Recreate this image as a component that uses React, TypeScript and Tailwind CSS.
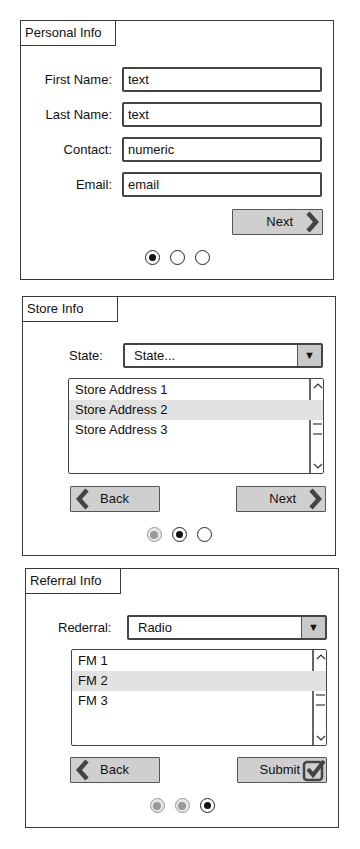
import React from "react";

const FONT = { fontFamily: '"Comic Sans MS", "Liberation Sans", Arial, sans-serif' };

type PanelProps = {
  title: string;
  className: string;
  children: React.ReactNode;
};

function Panel({ title, className, children }: PanelProps) {
  return (
    <div className={`flex h-[260px] w-[314px] flex-col border-[1.5px] border-[#3a3a3a] bg-white ${className}`}>
      <div className="flex h-[25px] w-[95px] items-center border-r-[1.5px] border-b-[1.5px] border-[#3a3a3a] pl-[4px] text-[13px]">
        {title}
      </div>
      {children}
    </div>
  );
}

function Chevron({ dir }: { dir: "left" | "right" }) {
  return (
    <svg width="14" height="22" viewBox="0 0 14 22">
      <polyline
        points={dir === "right" ? "3,2 11,11 3,20" : "11,2 3,11 11,20"}
        fill="none"
        stroke="#444"
        strokeWidth="4.5"
        strokeLinejoin="miter"
      />
    </svg>
  );
}

function CheckIcon() {
  return (
    <svg width="24" height="24" viewBox="0 0 24 24">
      <rect x="2" y="4" width="18" height="18" rx="3" fill="none" stroke="#444" strokeWidth="2.5" />
      <polyline points="6,11 11,17 22,3" fill="none" stroke="#444" strokeWidth="4" />
    </svg>
  );
}

function Radio({ state }: { state: "on" | "off" | "done" }) {
  if (state === "done") {
    return (
      <div className="flex h-[15px] w-[15px] items-center justify-center rounded-full border-[1.5px] border-[#9a9a9a] bg-[#e6e6e6]">
        <div className="h-[8px] w-[8px] rounded-full bg-[#999]" />
      </div>
    );
  }
  return (
    <div className="flex h-[15px] w-[15px] items-center justify-center rounded-full border-[1.5px] border-[#222] bg-white">
      {state === "on" && <div className="h-[7px] w-[7px] rounded-full bg-[#111]" />}
    </div>
  );
}

function Steps({ current }: { current: number }) {
  return (
    <div className="flex justify-center gap-[10px]">
      {[0, 1, 2].map((i) => (
        <Radio key={i} state={i === current ? "on" : i < current ? "done" : "off"} />
      ))}
    </div>
  );
}

function Field({ value }: { value: string }) {
  return (
    <div className="flex h-[25px] w-[200px] items-center rounded-[2px] border-2 border-[#444] pl-[4px] text-[13px]">
      {value}
    </div>
  );
}

function Select({ value }: { value: string }) {
  return (
    <div className="flex h-[25px] w-[200px] items-stretch rounded-[2px] border-2 border-[#444] text-[13px]">
      <div className="flex flex-1 items-center pl-[9px]">{value}</div>
      <div className="flex w-[24px] items-center justify-center border-l-[1.5px] border-[#555] bg-[#c9c9c9] text-[11px]">
        ▼
      </div>
    </div>
  );
}

function ListBox({ items, height }: { items: string[]; height: string }) {
  return (
    <div className={`relative w-[256px] rounded-[2px] border-[1.5px] border-[#444] bg-white pt-[1px] text-[13px] ${height}`}>
      <div className="absolute right-0 top-0 bottom-0 w-[14px] border-l-2 border-[#666] bg-white">
        <svg className="absolute left-[2px] top-[3px]" width="10" height="8" viewBox="0 0 10 8">
          <polyline points="1,6 5,2 9,6" fill="none" stroke="#333" strokeWidth="1.2" />
        </svg>
        <div className="absolute left-[2px] top-[44px] h-[2px] w-[9px] bg-[#888]" />
        <div className="absolute left-[2px] top-[54px] h-[2px] w-[9px] bg-[#888]" />
        <svg className="absolute bottom-[3px] left-[2px]" width="10" height="8" viewBox="0 0 10 8">
          <polyline points="1,2 5,6 9,2" fill="none" stroke="#333" strokeWidth="1.2" />
        </svg>
      </div>
      {items.map((it, i) => (
        <div
          key={it}
          className={`relative flex h-[20px] items-center pl-[6px] ${i === 1 ? "z-10 bg-[#e2e2e2]" : ""}`}
        >
          {it}
        </div>
      ))}
    </div>
  );
}

function Button({ children, className }: { children: React.ReactNode; className: string }) {
  return (
    <div
      className={`flex h-[26px] items-center rounded-[1px] border-[1.5px] border-[#555] bg-[#cfcfcf] text-[13px] ${className}`}
    >
      {children}
    </div>
  );
}

export default function App() {
  return (
    <div className="min-h-[849px] w-[360px] bg-white text-[#111]" style={FONT}>
      <div className="flex flex-col pt-[20px]">
        <Panel title="Personal Info" className="ml-[20px]">
          <div className="mt-[21px] flex flex-col gap-[10px]">
            {[
              ["First Name:", "text"],
              ["Last Name:", "text"],
              ["Contact:", "numeric"],
              ["Email:", "email"],
            ].map(([label, value]) => (
              <div key={label} className="flex items-center gap-[10px]">
                <div className="w-[91px] text-right text-[13px]">{label}</div>
                <Field value={value} />
              </div>
            ))}
          </div>
          <Button className="mt-[12px] mr-[10px] w-[91px] self-end justify-end gap-[12px] pr-[3px]">
            <span>Next</span>
            <Chevron dir="right" />
          </Button>
          <div className="mt-[15px]">
            <Steps current={0} />
          </div>
        </Panel>

        <Panel title="Store Info" className="ml-[22px] mt-[16px]">
          <div className="mt-[21px] ml-[46px] flex items-center">
            <div className="w-[54px] text-[13px]">State:</div>
            <Select value="State..." />
          </div>
          <div className="ml-[45px] mt-[10px]">
            <ListBox items={["Store Address 1", "Store Address 2", "Store Address 3"]} height="h-[96px]" />
          </div>
          <div className="ml-[47px] mt-[12px] flex w-[256px] justify-between">
            <Button className="w-[90px] gap-[10px] pl-[5px]">
              <Chevron dir="left" />
              <span>Back</span>
            </Button>
            <Button className="w-[90px] justify-end gap-[12px] pr-[3px]">
              <span>Next</span>
              <Chevron dir="right" />
            </Button>
          </div>
          <div className="mt-[15px]">
            <Steps current={1} />
          </div>
        </Panel>

        <Panel title="Referral Info" className="ml-[25px] mt-[12px]">
          <div className="mt-[21px] ml-[32px] flex items-center">
            <div className="w-[69px] text-[13px]">Rederral:</div>
            <Select value="Radio" />
          </div>
          <div className="ml-[45px] mt-[9px]">
            <ListBox items={["FM 1", "FM 2", "FM 3"]} height="h-[97px]" />
          </div>
          <div className="ml-[44px] mt-[11px] flex w-[257px] justify-between">
            <Button className="w-[90px] gap-[10px] pl-[5px]">
              <Chevron dir="left" />
              <span>Back</span>
            </Button>
            <Button className="w-[90px] justify-end gap-[2px] pr-0">
              <span>Submit</span>
              <CheckIcon />
            </Button>
          </div>
          <div className="mt-[15px]">
            <Steps current={2} />
          </div>
        </Panel>
      </div>
    </div>
  );
}
